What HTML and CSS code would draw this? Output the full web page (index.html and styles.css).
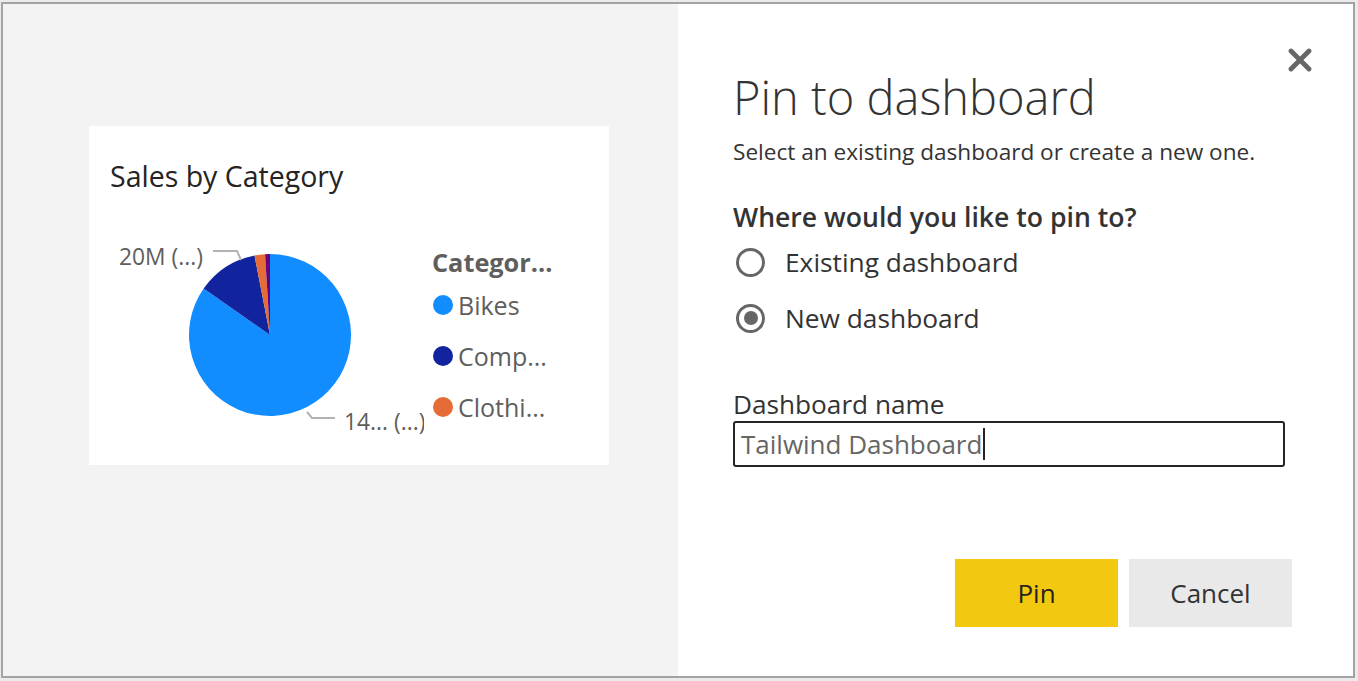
FILE: index.html
```html
<!DOCTYPE html>
<html lang="en">
<head>
<meta charset="utf-8">
<title>Pin to dashboard</title>
<link rel="stylesheet" href="styles.css">
</head>
<body>
<div class="dialog">
  <section class="preview">
    <div class="card">
      <div class="card-title">Sales by Category</div>
      <div class="card-body">
        <svg class="pie" width="335" height="230" viewBox="0 0 335 230">
          <path d="M181,115 L181,34 A81,81 0 1 1 114.65,68.54 Z" fill="#118dff"/>
          <path d="M181,115 L114.65,68.54 A81,81 0 0 1 165.5,35.5 Z" fill="#12239e"/>
          <path d="M181,115 L165.5,35.5 A81,81 0 0 1 176.06,34.15 Z" fill="#e66c37"/>
          <path d="M181,115 L176.06,34.15 A81,81 0 0 1 181,34 Z" fill="#6b007b"/>
          <polyline points="124,31 148,31 152,40" fill="none" stroke="#b3b3b3" stroke-width="2"/>
          <polyline points="218,192 223,198 246,198" fill="none" stroke="#b3b3b3" stroke-width="2"/>
          <text x="30" y="45" class="pie-label">20M (...)</text>
          <text x="255" y="210" class="pie-label">14... (...)</text>
        </svg>
        <div class="legend">
          <div class="legend-title">Categor...</div>
          <div class="legend-item"><span class="dot dot-bikes"></span>Bikes</div>
          <div class="legend-item"><span class="dot dot-comp"></span>Comp...</div>
          <div class="legend-item"><span class="dot dot-cloth"></span>Clothi...</div>
        </div>
      </div>
    </div>
  </section>
  <section class="form">
    <button class="close" aria-label="Close">
      <svg width="24" height="24" viewBox="0 0 24 24"><path d="M3 3 L21 21 M21 3 L3 21" stroke="#666" stroke-width="4.8" stroke-linecap="round"/></svg>
    </button>
    <h1 class="title">Pin to dashboard</h1>
    <p class="subtitle">Select an existing dashboard or create a new one.</p>
    <div class="question">Where would you like to pin to?</div>
    <div class="radios">
      <div class="radio-row"><span class="radio"></span><span class="radio-label">Existing dashboard</span></div>
      <div class="radio-row"><span class="radio checked"></span><span class="radio-label">New dashboard</span></div>
    </div>
    <div class="field-label">Dashboard name</div>
    <div class="input"><span class="input-text">Tailwind Dashboard</span><span class="caret"></span></div>
    <div class="actions">
      <button class="btn btn-primary">Pin</button>
      <button class="btn btn-secondary">Cancel</button>
    </div>
  </section>
</div>
</body>
</html>
```

FILE: styles.css
```css
* { box-sizing: border-box; }
html, body { margin: 0; padding: 0; }
body {
  background: #ebebeb;
  width: 1358px;
  height: 681px;
  overflow: hidden;
  font-family: "Open Sans", "Noto Sans", sans-serif;
}
.dialog {
  margin: 2px 0 0 1px;
  width: 1354px;
  height: 676px;
  border: 2px solid #a3a3a3;
  display: flex;
  position: relative;
  background: #fff;
}
.preview {
  width: 675px;
  height: 100%;
  background: #f3f3f3;
  padding: 122px 0 0 86px;
}
.card {
  width: 520px;
  height: 339px;
  background: #fff;
}
.card-title {
  padding: 32px 0 0 21px;
  font-size: 28.5px;
  line-height: 36px;
  color: #252423;
}
.card-body {
  display: flex;
  margin-top: 26px;
}
.pie { display: block; flex: none; }
.pie-label {
  font-family: "Open Sans", "Noto Sans", sans-serif;
  font-size: 22.8px;
  fill: #605e5c;
}
.legend {
  margin-left: 8px;
  color: #605e5c;
}
.legend-title {
  font-weight: 700;
  font-size: 25.3px;
  line-height: 30px;
  margin-top: 27px;
}
.legend-item {
  display: flex;
  align-items: center;
  font-size: 25px;
  line-height: 30px;
  margin-top: 21px;
}
.legend-title + .legend-item { margin-top: 13px; }
.dot {
  width: 20px;
  height: 20px;
  border-radius: 50%;
  margin: 0 5px 0 1px;
  flex: none;
}
.dot-bikes { background: #118dff; }
.dot-comp { background: #12239e; }
.dot-cloth { background: #e66c37; }

.form {
  width: 675px;
  height: 100%;
  padding: 0 0 0 55px;
  position: relative;
  color: #333;
}
.close {
  position: absolute;
  top: 41px;
  right: 38px;
  width: 30px;
  height: 30px;
  padding: 3px;
  border: 0;
  background: transparent;
}
.close svg { display: block; }
.title {
  margin: 63px 0 0 0;
  font-weight: 300;
  font-size: 47px;
  line-height: 60px;
  color: #333;
}
.subtitle {
  margin: 10px 0 0 0;
  font-size: 22.6px;
  line-height: 30px;
}
.question {
  margin-top: 33px;
  font-size: 26.6px;
  font-weight: 600;
  line-height: 34px;
}
.radios { margin-top: 12px; }
.radio-row {
  display: flex;
  align-items: center;
  height: 32px;
}
.radio-row + .radio-row { margin-top: 24px; }
.radio {
  width: 29px;
  height: 29px;
  border: 3px solid #666;
  border-radius: 50%;
  margin-left: 3px;
  display: flex;
  align-items: center;
  justify-content: center;
  flex: none;
}
.radio.checked::after {
  content: "";
  width: 14px;
  height: 14px;
  border-radius: 50%;
  background: #666;
}
.radio-label {
  margin-left: 20px;
  font-size: 26.3px;
}
.field-label {
  margin-top: 53px;
  font-size: 26.2px;
  line-height: 34px;
}
.input {
  width: 552px;
  height: 46px;
  border: 2px solid #252423;
  border-radius: 3px;
  display: flex;
  align-items: center;
  padding-left: 6px;
  font-size: 26px;
  color: #666;
}
.caret {
  width: 2px;
  height: 32px;
  background: #252423;
  margin-left: 1px;
}
.actions {
  display: flex;
  gap: 11px;
  margin-top: 92px;
  padding-left: 222px;
}
.btn {
  width: 163px;
  height: 68px;
  border: 0;
  font-family: inherit;
  font-size: 26px;
  padding: 0;
}
.btn-primary { background: #f2c811; color: #252423; }
.btn-secondary { background: #e9e9e9; color: #333; }
```
